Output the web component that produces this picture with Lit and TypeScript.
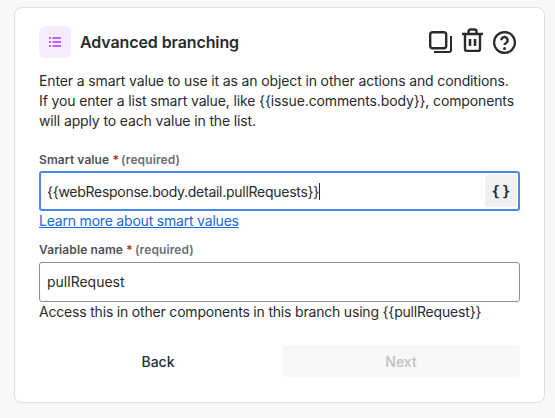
import { LitElement, html, css } from 'lit';
import { customElement } from 'lit/decorators.js';

@customElement('app-root')
export class AppRoot extends LitElement {
  static styles = css`
    :host {
      display: block;
      width: 555px;
      height: 418px;
      box-sizing: border-box;
      padding: 7px 10px 15px 14px;
      background: #f8f8f8;
      font-family: Inter, 'Liberation Sans', sans-serif;
      color: #292a2e;
      overflow: hidden;
    }
    .card {
      box-sizing: border-box;
      height: 396px;
      background: #fff;
      border: 1px solid #dddedf;
      border-radius: 8px;
      padding: 18px 24px 0 24px;
    }
    .header {
      display: flex;
      align-items: center;
      height: 32px;
    }
    .badge {
      width: 32px;
      height: 32px;
      border-radius: 6px;
      background: #f7ecfe;
      display: flex;
      align-items: center;
      justify-content: center;
      margin-right: 9px;
    }
    .title {
      flex: 1;
      font-size: 16px;
      font-weight: 600;
      line-height: 20px;
      letter-spacing: -0.1px;
    }
    .tools {
      display: flex;
      align-items: center;
      gap: 10px;
      margin-right: 4px;
    }
    .tools svg {
      display: block;
    }
    .tools .trash {
      margin-bottom: 4px;
    }
    .desc {
      margin: 13px 0 0;
      font-size: 14px;
      line-height: 20px;
      letter-spacing: -0.13px;
    }
    .label {
      font-size: 12px;
      font-weight: 600;
      line-height: 16px;
      letter-spacing: 0.1px;
      color: #505258;
    }
    .label.first {
      margin-top: 21px;
    }
    .label.second {
      margin-top: 11px;
    }
    .star {
      color: #ae2e24;
    }
    .req {
      margin-left: -1px;
      color: #6b6e76;
    }
    .field {
      box-sizing: border-box;
      height: 40px;
      margin-top: 3px;
      display: flex;
      align-items: center;
      padding-left: 7px;
      font-size: 14px;
      line-height: 20px;
      border: 1px solid #8c8f97;
      border-radius: 3px;
    }
    .label.second + .field {
      margin-top: 4px;
    }
    .field.focus {
      border: 2px solid #4688ec;
      padding-left: 6px;
      padding-right: 1px;
      letter-spacing: -0.27px;
    }
    .field .value {
      flex: 1;
    }
    .field.focus .value {
      padding-top: 2px;
    }
    .caret {
      display: inline-block;
      width: 1px;
      height: 17px;
      background: #292a2e;
      vertical-align: -3px;
    }
    .insert {
      box-sizing: border-box;
      width: 32px;
      height: 32px;
      padding-left: 2px;
      border-radius: 3px;
      background: #f0f1f2;
      display: flex;
      align-items: center;
      justify-content: center;
      font-family: 'DejaVu Sans Mono', monospace;
      font-size: 14px;
      font-weight: 700;
      letter-spacing: 2px;
    }
    .link {
      display: block;
      font-size: 14px;
      line-height: 20px;
      letter-spacing: -0.2px;
      color: #1868db;
      text-decoration: underline;
    }
    .help {
      font-size: 14px;
      line-height: 20px;
      letter-spacing: -0.19px;
    }
    .actions {
      display: flex;
      gap: 5px;
      margin-top: 23px;
    }
    .btn {
      flex: 1;
      height: 32px;
      border-radius: 3px;
      display: flex;
      align-items: center;
      justify-content: center;
      font-size: 14px;
      font-weight: 500;
    }
    .btn.off {
      background: #f8f8f8;
      color: #bfc0c4;
    }
  `;

  render() {
    return html`
      <div class="card">
        <div class="header">
          <div class="badge">
            <svg width="12" height="10" viewBox="0 0 12 10" fill="#bf63f3">
              <rect x="0" y="0" width="2" height="2"></rect>
              <rect x="3.500" y="0" width="8.500" height="2"></rect>
              <rect x="0" y="4" width="2" height="2"></rect>
              <rect x="3.500" y="4" width="8.500" height="2"></rect>
              <rect x="0" y="8" width="2" height="2"></rect>
              <rect x="3.500" y="8" width="8.500" height="2"></rect>
            </svg>
          </div>
          <div class="title">Advanced branching</div>
          <div class="tools">
            <svg width="23" height="22" viewBox="0 0 23 22" fill="none" stroke="#292a2e" stroke-width="2.400">
              <rect x="1.200" y="1.200" width="16" height="16" rx="2.500"></rect>
              <path d="M22 5v14a2 2 0 0 1-2 2H5" stroke-width="2"></path>
            </svg>
            <svg class="trash" width="21" height="24" viewBox="0 0 21 24" fill="none" stroke="#292a2e" stroke-width="2.400">
              <path d="M0 6h21M3 6v15a2 2 0 0 0 2 2h11a2 2 0 0 0 2-2V6M6.500 6V3.500a2 2 0 0 1 2-2h4a2 2 0 0 1 2 2V6"></path>
              <path d="M8 11v7M13 11v7" stroke-width="2.600"></path>
            </svg>
            <svg width="23" height="23" viewBox="0 0 23 23" fill="none" stroke="#292a2e" stroke-width="2.200">
              <circle cx="11.500" cy="11.500" r="10.400"></circle>
              <path d="M8.300 9.200a3.200 3.200 0 1 1 4.800 2.800c-1 .6-1.600 1.100-1.600 2" stroke-width="2.400"></path>
              <circle cx="11.500" cy="17.500" r="1.500" fill="#292a2e" stroke="none"></circle>
            </svg>
          </div>
        </div>
        <p class="desc">
          Enter a smart value to use it as an object in other actions and conditions.
          If you enter a list smart value, like {{issue.comments.body}}, components
          will apply to each value in the list.
        </p>
        <div class="label first">Smart value <span class="star">*</span> <span class="req">(required)</span></div>
        <div class="field focus">
          <span class="value">{{webResponse.body.detail.pullRequests}}<span class="caret"></span></span>
          <span class="insert">{}</span>
        </div>
        <a class="link">Learn more about smart values</a>
        <div class="label second">Variable name <span class="star">*</span> <span class="req">(required)</span></div>
        <div class="field"><span class="value">pullRequest</span></div>
        <div class="help">Access this in other components in this branch using {{pullRequest}}</div>
        <div class="actions">
          <div class="btn">Back</div>
          <div class="btn off">Next</div>
        </div>
      </div>
    `;
  }
}
